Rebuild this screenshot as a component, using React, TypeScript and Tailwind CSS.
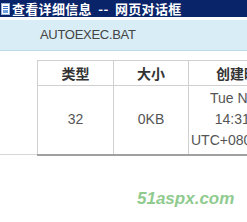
import React from "react";

export default function App() {
  const cjk = { fontFamily: '"Noto Sans CJK SC", "Liberation Sans", sans-serif' };
  return (
    <div className="w-[247px] h-[222px] overflow-hidden bg-white relative" style={{ fontFamily: '"Liberation Sans", "Noto Sans CJK SC", sans-serif' }}>
      <div className="h-[17px] bg-[#0a246a] flex items-center gap-[2px] pl-[1px]">
        <svg width="9" height="12" viewBox="0 0 9 12" className="shrink-0">
          <rect x="0.5" y="0.5" width="8" height="11" fill="#ffffff" stroke="#9bb4d8" />
          <rect x="2" y="3" width="5" height="1" fill="#3a6fc8" />
          <rect x="2" y="5" width="5" height="1" fill="#3a6fc8" />
          <rect x="2" y="7" width="5" height="3" fill="#6aa0e0" />
        </svg>
        <span className="text-white font-bold text-[13px] leading-none whitespace-pre tracking-[0.3px]" style={cjk}>
          {"查看详细信息  --  网页对话框"}
        </span>
      </div>
      <div className="h-[3px]" />
      <div className="h-[31px] bg-[#d8edf6] border-b border-[#bcdbe9] flex items-center pl-[40px]">
        <span className="text-[13px] text-[#444] tracking-[-0.3px]">AUTOEXEC.BAT</span>
      </div>
      <div className="pt-[9px] pl-[37px] border-b border-[#d8d8d8] h-[104px]">
        <table className="border-collapse w-[300px] table-fixed border-b-2 border-b-[#a0a0a0]">
          <colgroup>
            <col className="w-[76px]" />
            <col className="w-[75px]" />
            <col className="w-[149px]" />
          </colgroup>
          <thead>
            <tr className="h-[25px]">
              <th className="border border-[#d0d0d0] text-[14px] font-bold text-[#333] p-0" style={cjk}>类型</th>
              <th className="border border-[#d0d0d0] text-[14px] font-bold text-[#333] p-0" style={cjk}>大小</th>
              <th className="border border-[#d0d0d0] text-[14px] font-bold text-[#333] p-0 text-left pl-[27px] whitespace-nowrap" style={cjk}>创建时间</th>
            </tr>
          </thead>
          <tbody>
            <tr className="h-[69px]">
              <td className="border border-[#d0d0d0] text-center text-[14px] text-[#555] p-0">32</td>
              <td className="border border-[#d0d0d0] text-center text-[14px] text-[#555] p-0">0KB</td>
              <td className="border border-[#d0d0d0] text-[14px] text-[#555] p-0 leading-[21px] whitespace-nowrap">
                <div className="w-[104px] text-center pl-[2px]">
                  <div>Tue Nov 3</div>
                  <div>14:31:45</div>
                  <div>UTC+0800 2009</div>
                </div>
              </td>
            </tr>
          </tbody>
        </table>
      </div>
      <div className="pt-[35px] pl-[137px] leading-[17px]">
        <span className="text-[17px] font-bold italic text-[#8fcb8f]">
          51aspx.com
        </span>
      </div>
    </div>
  );
}
